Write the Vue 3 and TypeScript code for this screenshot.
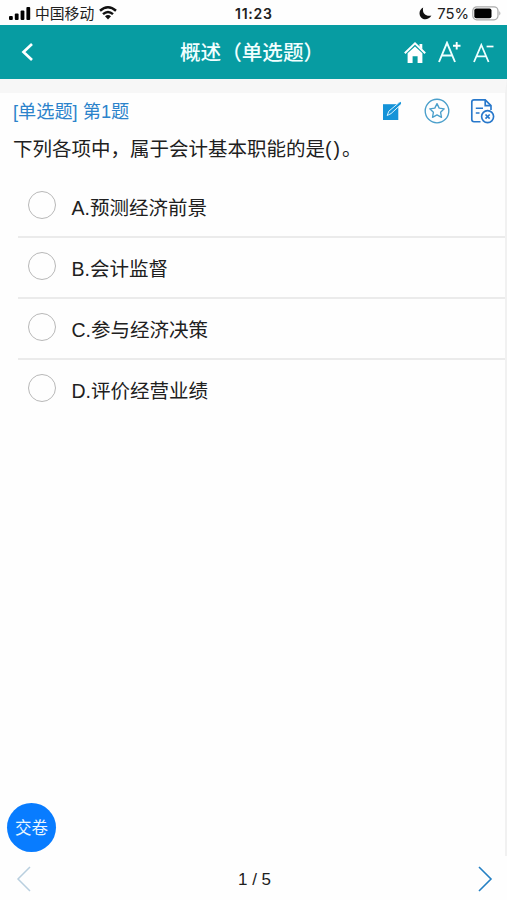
<script setup lang="ts">
import { ref } from 'vue'

interface Option {
  key: string
  text: string
}

const options: Option[] = [
  { key: 'A', text: '预测经济前景' },
  { key: 'B', text: '会计监督' },
  { key: 'C', text: '参与经济决策' },
  { key: 'D', text: '评价经营业绩' },
]
const selected = ref<string>('')
const current = ref<number>(1)
const total = 5
</script>

<template>
  <div class="screen">
    <div class="status">
      <div class="status-left">
        <svg class="signal" width="22" height="14" viewBox="0 0 22 14">
          <rect x="0" y="9" width="3.8" height="4" rx="1" />
          <rect x="5.8" y="6.5" width="3.8" height="6.5" rx="1" />
          <rect x="11.6" y="3.5" width="3.8" height="9.5" rx="1" />
          <rect x="17.4" y="0" width="3.8" height="13" rx="1" />
        </svg>
        <span class="carrier">中国移动</span>
        <svg class="wifi" width="18" height="14" viewBox="0 0 18 14">
          <path d="M1 4.8Q9-2.2 17 4.8" fill="none" stroke="#111" stroke-width="2.5" />
          <path d="M4 8.2Q9 3.6 14 8.2" fill="none" stroke="#111" stroke-width="2.4" />
          <path d="M6 10.2Q9 7.8 12 10.2L9 13.4Z" fill="#111" />
        </svg>
      </div>
      <span class="time">11:23</span>
      <div class="status-right">
        <svg width="13" height="13" viewBox="0 0 13 13">
          <path d="M4.2.5C2.9 5.8 6.3 9.8 12.4 8.5C9.9 13 4.3 13.5 1.7 10C-.7 6.6.7 2.2 4.2.5Z" fill="#111" />
        </svg>
        <span class="percent">75%</span>
        <svg class="battery" width="30" height="15" viewBox="0 0 30 15">
          <rect x=".8" y=".8" width="25.2" height="13" rx="4" fill="#fff" stroke="#aaa" stroke-width="1.2" />
          <rect x="2.3" y="2.5" width="17.2" height="9.7" rx="2" fill="#000" />
          <path d="M27.3 5Q29.5 7.3 27.3 9.6Z" fill="#aaa" />
        </svg>
      </div>
    </div>

    <header class="header">
      <svg class="back" width="14" height="20" viewBox="0 0 14 20">
        <path d="M12 2L3.5 10L12 18" fill="none" stroke="#fff" stroke-width="2.7" />
      </svg>
      <h1>概述（单选题）</h1>
      <div class="tools">
        <svg class="home" width="22" height="22" viewBox="0 0 22 22">
          <path d="M.8 11.2L11 1.4L21.2 11.2" fill="none" stroke="#fff" stroke-width="2" />
          <path d="M15.5 2H18.3V7.5L15.5 5Z" fill="#fff" />
          <path d="M3.6 11.3L11 4.4L18.4 11.3V21H13.6V14.2H8.6V21H3.6Z" fill="#fff" />
        </svg>
        <svg class="font-up" width="23" height="22" viewBox="0 0 23 22">
          <path d="M1 21L9 1.8L17 21M3.8 14.5H14.2" fill="none" stroke="#ecffff" stroke-width="1.9" />
          <path d="M15 4.8H22.5M18.7 1V8.6" fill="none" stroke="#fff" stroke-width="1.9" />
        </svg>
        <svg class="font-down" width="21" height="20" viewBox="0 0 21 20">
          <path d="M1 19L8.3 2L15.6 19M3.5 13.3H13" fill="none" stroke="#ecffff" stroke-width="1.8" />
          <path d="M13.6 3.5H20.5" fill="none" stroke="#fff" stroke-width="1.7" />
        </svg>
      </div>
    </header>

    <main class="content">
      <div class="meta">
        <span class="tag">[单选题] 第1题</span>
        <div class="actions">
          <svg width="20" height="20" viewBox="0 0 20 20">
            <path d="M1 3.2H16.3V19H1Z" fill="#1593d8" />
            <path d="M5.2 14.5L6.8 10.2L16.8 1.8L18.8 3.6L9 12.6Z" fill="#1593d8" stroke="#d9f3ff" stroke-width="1" />
            <path d="M16.6 2L18.8 .8L19.1 2.4L17.8 4Z" fill="#1593d8" />
          </svg>
          <svg class="star" width="26" height="26" viewBox="0 0 26 26" fill="none" stroke="#4a9fcb" stroke-width="1.35">
            <circle cx="13" cy="13" r="11.8" />
            <path d="M13 5.6L15.2 10.1L20.2 10.8L16.6 14.3L17.5 19.3L13 16.9L8.5 19.3L9.4 14.3L5.8 10.8L10.8 10.1Z" stroke-linejoin="round" />
          </svg>
          <svg class="paper" width="25" height="26" viewBox="0 0 25 26" fill="none" stroke="#2878cb" stroke-width="1.65">
            <path d="M10.5 23.7H4Q1.8 23.7 1.8 21.5V4Q1.8 1.8 4 1.8H15.2L21 7.6V12" />
            <path d="M15.2 1.8V7.6H21M5.8 10.2H13M5.8 15H9.5" />
            <circle cx="17.6" cy="18.6" r="6" />
            <path d="M15.5 16.5L19.7 20.7M19.7 16.5L15.5 20.7" />
          </svg>
        </div>
      </div>

      <p class="question">下列各项中，属于会计基本职能的是<span class="parens">()</span>。</p>

      <ul class="options">
        <li v-for="item in options" :key="item.key" @click="selected = item.key">
          <span class="radio" :class="{ checked: selected === item.key }"></span>
          <span class="label">{{ item.key }}.{{ item.text }}</span>
        </li>
      </ul>

      <button class="submit" type="button">交卷</button>
    </main>

    <footer class="pager">
      <svg width="16" height="28" viewBox="0 0 16 28">
        <path d="M14 2L2 14L14 26" fill="none" stroke="#b9cfdf" stroke-width="1.5" />
      </svg>
      <span class="count">{{ current }} / {{ total }}</span>
      <svg width="16" height="28" viewBox="0 0 16 28">
        <path d="M2 2L14 14L2 26" fill="none" stroke="#2580c3" stroke-width="1.6" />
      </svg>
    </footer>
  </div>
</template>

<style>
body {
  margin: 0;
  background: #fefefe;
}
</style>

<style scoped>
.screen {
  width: 507px;
  height: 900px;
  display: flex;
  flex-direction: column;
  overflow: hidden;
  background: #fefefe;
  color: #202020;
  font-family: "Liberation Sans", "Noto Sans CJK SC", sans-serif;
}
svg {
  display: block;
  flex: none;
}
.status {
  height: 25px;
  box-sizing: border-box;
  padding: 2px 5px 0 9px;
  display: grid;
  grid-template-columns: 226px auto 1fr;
  align-items: center;
  line-height: 22px;
}
.status-left,
.status-right {
  display: flex;
  align-items: center;
}
.status-right {
  justify-content: flex-end;
}
.carrier {
  margin-left: 4px;
  font-size: 14.8px;
}
.wifi {
  margin-left: 5px;
  margin-bottom: 1px;
}
.time {
  font-family: Inter, "Liberation Sans", sans-serif;
  font-size: 14px;
  font-weight: 600;
  letter-spacing: 0.75px;
}
.percent {
  margin: 0 3px 0 5px;
  font-family: Inter, "Liberation Sans", sans-serif;
  font-size: 14.8px;
}
.battery {
  margin-bottom: 1px;
}
.header {
  height: 54px;
  flex: none;
  box-sizing: border-box;
  padding: 0 13px 0 20px;
  display: grid;
  grid-template-columns: 160px auto 1fr;
  align-items: center;
  background: #079ca2;
  color: #f2ffff;
}
.back {
  margin-bottom: 1px;
}
h1 {
  margin: 1px 0 0;
  font-size: 20.6px;
  line-height: 30px;
  font-weight: 500;
}
.tools {
  display: flex;
  justify-content: flex-end;
  align-items: center;
}
.home {
  margin-top: 2px;
}
.font-up {
  margin-left: 12px;
}
.font-down {
  margin: 2px 0 0 12px;
}
.content {
  flex: 1;
  display: flex;
  flex-direction: column;
  border-top: 14px solid #f7f7f7;
  border-right: 2px solid #f1f1f1;
}
.meta {
  height: 36px;
  padding: 0 10px 0 13px;
  display: flex;
  justify-content: space-between;
  align-items: center;
}
.tag {
  margin-top: 2px;
  color: #2c83cb;
  font-size: 18.2px;
  line-height: 28px;
}
.actions {
  display: flex;
  align-items: center;
}
.star {
  margin-left: 22px;
}
.paper {
  margin-left: 20px;
}
.question {
  margin: 5px 0 0 13px;
  font-size: 19.5px;
  line-height: 30px;
}
.parens {
  letter-spacing: 2px;
}
.options {
  margin: 13px 0 0;
  padding: 0 0 0 18px;
  list-style: none;
}
.options li {
  height: 61px;
  box-sizing: border-box;
  padding-left: 10px;
  display: flex;
  align-items: center;
  border-bottom: 2px solid #ebebeb;
}
.options li:last-child {
  border-bottom-color: transparent;
}
.radio {
  width: 28px;
  height: 28px;
  box-sizing: border-box;
  border: 1.4px solid #b8b8b8;
  border-radius: 50%;
  margin-bottom: 4px;
}
.radio.checked {
  border: 8px solid #087cff;
}
.label {
  margin: 3px 0 0 15.5px;
  font-size: 19.5px;
  line-height: 30px;
}
.submit {
  width: 49px;
  height: 49px;
  margin: auto 0 4px 7px;
  padding: 0 0 2px;
  border: 0;
  border-radius: 50%;
  background: #087cff;
  color: #e8f6ff;
  font: 16.5px "Liberation Sans", "Noto Sans CJK SC", sans-serif;
}
.pager {
  height: 44px;
  flex: none;
  box-sizing: border-box;
  padding: 2px 14px 0 16px;
  display: flex;
  justify-content: space-between;
  align-items: center;
}
.count {
  margin-top: 1px;
  font-size: 17px;
}
</style>
